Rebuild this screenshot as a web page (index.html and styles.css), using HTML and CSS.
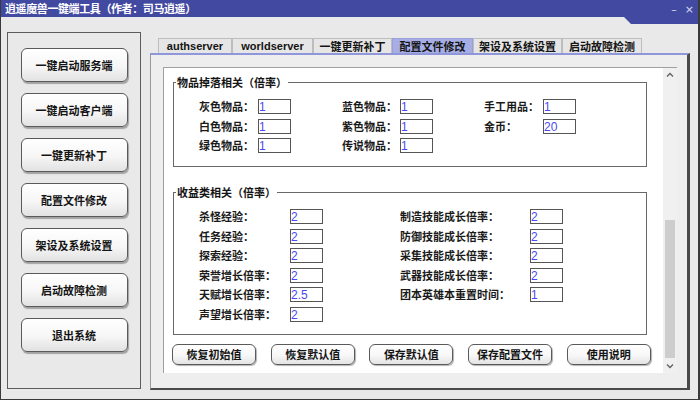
FILE: index.html
```html
<!DOCTYPE html>
<html lang="zh-CN">
<head>
<meta charset="utf-8">
<title>逍遥魔兽一键端工具</title>
<link rel="stylesheet" href="styles.css">
</head>
<body>
<div class="window">
  <div class="titlebar">
    <div class="title-left"><span class="title">逍遥魔兽一键端工具（作者：司马逍遥）</span></div>
    <div class="title-right"><span class="wc-min">–</span><span class="wc-close">×</span></div>
  </div>
  <div class="main">
    <div class="side">
      <button class="sbtn">一键启动服务端</button>
      <button class="sbtn">一键启动客户端</button>
      <button class="sbtn">一键更新补丁</button>
      <button class="sbtn">配置文件修改</button>
      <button class="sbtn">架设及系统设置</button>
      <button class="sbtn">启动故障检测</button>
      <button class="sbtn">退出系统</button>
    </div>
    <div class="right">
      <div class="tabs">
        <div class="tab latin t1">authserver</div>
        <div class="tab latin t2">worldserver</div>
        <div class="tab t3">一键更新补丁</div>
        <div class="tab t4 active">配置文件修改</div>
        <div class="tab t5">架设及系统设置</div>
        <div class="tab t6">启动故障检测</div>
      </div>
      <div class="panel">
        <div class="scroll">
          <div class="content">
            <fieldset class="group g1">
              <legend>物品掉落相关（倍率）</legend>
              <div class="grid1">
                <span class="lbl">灰色物品：</span><span class="inp">1</span><span></span>
                <span class="lbl">蓝色物品：</span><span class="inp">1</span><span></span>
                <span class="lbl">手工用品：</span><span class="inp">1</span>
                <span class="lbl">白色物品：</span><span class="inp">1</span><span></span>
                <span class="lbl">紫色物品：</span><span class="inp">1</span><span></span>
                <span class="lbl">金币：</span><span class="inp">20</span>
                <span class="lbl">绿色物品：</span><span class="inp">1</span><span></span>
                <span class="lbl">传说物品：</span><span class="inp">1</span><span></span>
              </div>
            </fieldset>
            <fieldset class="group g2">
              <legend>收益类相关（倍率）</legend>
              <div class="grid2">
                <span class="lbl">杀怪经验：</span><span class="inp">2</span><span></span>
                <span class="lbl">制造技能成长倍率：</span><span class="inp">2</span>
                <span class="lbl">任务经验：</span><span class="inp">2</span><span></span>
                <span class="lbl">防御技能成长倍率：</span><span class="inp">2</span>
                <span class="lbl">探索经验：</span><span class="inp">2</span><span></span>
                <span class="lbl">采集技能成长倍率：</span><span class="inp">2</span>
                <span class="lbl">荣誉增长倍率：</span><span class="inp">2</span><span></span>
                <span class="lbl">武器技能成长倍率：</span><span class="inp">2</span>
                <span class="lbl">天赋增长倍率：</span><span class="inp">2.5</span><span></span>
                <span class="lbl">团本英雄本重置时间：</span><span class="inp">1</span>
                <span class="lbl">声望增长倍率：</span><span class="inp">2</span>
              </div>
            </fieldset>
            <div class="actions">
              <button class="abtn">恢复初始值</button>
              <button class="abtn">恢复默认值</button>
              <button class="abtn">保存默认值</button>
              <button class="abtn">保存配置文件</button>
              <button class="abtn">使用说明</button>
            </div>
          </div>
          <div class="vscroll">
            <div class="arrow"><svg width="8" height="6" viewBox="0 0 8 6"><polyline points="1,4.5 4,1.5 7,4.5" fill="none" stroke="#606060" stroke-width="1.3"/></svg></div>
            <div class="track"><div class="thumb"></div></div>
            <div class="arrow"><svg width="8" height="6" viewBox="0 0 8 6"><polyline points="1,1.5 4,4.5 7,1.5" fill="none" stroke="#606060" stroke-width="1.3"/></svg></div>
          </div>
        </div>
      </div>
    </div>
  </div>
</div>
</body>
</html>
```
FILE: styles.css
```css
html, body {
  margin: 0;
  padding: 0;
}
body {
  width: 700px;
  height: 400px;
  overflow: hidden;
  background: #e9e9e9;
  font-family: "Noto Sans CJK SC", "Liberation Sans", sans-serif;
  color: #141414;
}
.window {
  width: 700px;
  height: 400px;
  box-sizing: border-box;
  border-left: 1px solid #3a3a3a;
  border-right: 2px solid #3a3a3a;
  border-bottom: 1px solid #3a3a3a;
  background: #e9e9e9;
}
.titlebar {
  display: flex;
  align-items: flex-start;
  height: 17px;
}
.title-left {
  flex: 1;
  height: 17px;
  background: #4249a0;
  display: flex;
  align-items: center;
  padding-left: 4px;
}
.title {
  color: #fff;
  font-size: 11px;
  font-weight: bold;
  letter-spacing: -0.4px;
  line-height: 17px;
}
.title-right {
  width: 74px;
  height: 24px;
  background: #4249a0;
  clip-path: polygon(0 0, 100% 0, 100% 100%, 7px 100%, 0 17px);
  display: flex;
  justify-content: flex-end;
  align-items: flex-start;
  gap: 8px;
  padding-right: 4px;
  box-sizing: border-box;
  color: #d8dbf0;
  font-family: "DejaVu Sans", sans-serif;
  font-size: 11px;
  line-height: 20px;
}
.main {
  display: flex;
  align-items: flex-start;
  padding: 15px 0 0 6px;
}
.side {
  width: 134px;
  height: 357px;
  box-sizing: border-box;
  border: 1px solid #5c5c5c;
  display: flex;
  flex-direction: column;
  align-items: center;
  padding-top: 15px;
  gap: 11px;
}
.sbtn {
  width: 107px;
  height: 34px;
  margin: 0;
  padding: 0;
  border: 1px solid #5a5a5a;
  border-radius: 6px;
  background: linear-gradient(#ffffff, #f6f6f6 55%, #e2e2e2);
  box-shadow: 1px 2px 1px rgba(0, 0, 0, 0.3);
  font-family: "Noto Sans CJK SC", sans-serif;
  font-size: 11px;
  font-weight: bold;
  color: #141414;
}
.right {
  margin-left: 9px;
  margin-top: 6px;
  width: 540px;
}
.tabs {
  display: flex;
  height: 15px;
  padding-left: 8px;
}
.tab {
  height: 15px;
  box-sizing: border-box;
  border: 1px solid #bdbdbd;
  border-bottom: none;
  background: #e6e6e6;
  font-size: 11px;
  font-weight: bold;
  line-height: 14px;
  text-align: center;
  color: #141414;
}
.tab.latin {
  font-family: "Liberation Sans", sans-serif;
}
.tab.active {
  background: #a7aee6;
  border-color: #9aa0dc;
}
.t1 { width: 74px; }
.t2 { width: 81px; }
.t3 { width: 79px; }
.t4 { width: 81px; }
.t5 { width: 89px; }
.t6 { width: 80px; }
.panel {
  height: 337px;
  box-sizing: border-box;
  border-top: 2px solid #8f96da;
  border-left: 1px solid #9a9a9a;
  border-right: 3px solid #4a4a4a;
  border-bottom: 2px solid #4a4a4a;
  background: #eeeeee;
  padding: 12px 0 0 12px;
}
.scroll {
  width: 514px;
  height: 306px;
  box-sizing: border-box;
  border-top: 1px solid #a0a0a0;
  border-left: 1px solid #a0a0a0;
  display: flex;
  background: #ffffff;
}
.content {
  flex: 1;
  padding-left: 9px;
}
.group {
  margin: 0;
  padding: 0;
  width: 474px;
  box-sizing: border-box;
  border: 1px solid #686868;
  min-width: 0;
}
.group legend {
  margin-left: 2px;
  padding: 0 1px;
  font-size: 11px;
  font-weight: bold;
  line-height: 14px;
  color: #141414;
}
.g1 {
  margin-top: 7px;
}
.g2 {
  margin-top: 18px;
}
.grid1 {
  display: grid;
  grid-template-columns: 59px 33px 51px 58px 33px 51px 59px 33px;
  grid-auto-rows: 15px;
  row-gap: 4.5px;
  padding: 10px 0 13px 25px;
  align-items: center;
}
.grid2 {
  display: grid;
  grid-template-columns: 91px 33px 77px 130px 33px;
  grid-auto-rows: 15px;
  row-gap: 4.6px;
  padding: 10px 0 12px 25px;
  align-items: center;
}
.lbl {
  font-size: 11px;
  font-weight: bold;
  white-space: nowrap;
  line-height: 15px;
  color: #1a1a1a;
}
.inp {
  height: 15px;
  box-sizing: border-box;
  border: 1px solid #555555;
  font-family: "Liberation Sans", sans-serif;
  font-size: 12px;
  line-height: 13px;
  padding-top: 1px;
  color: #4848f4;
  overflow: hidden;
}
.actions {
  display: flex;
  gap: 14.7px;
  margin: 9px 0 0 -1px;
}
.abtn {
  width: 84px;
  height: 21px;
  margin: 0;
  padding: 0;
  border: 1px solid #5a5a5a;
  border-radius: 6px;
  background: linear-gradient(#ffffff, #f7f7f7 55%, #e4e4e4);
  box-shadow: 1px 1px 1px rgba(0, 0, 0, 0.3);
  font-family: "Noto Sans CJK SC", sans-serif;
  font-size: 11px;
  font-weight: bold;
  color: #141414;
}
.vscroll {
  width: 14px;
  display: flex;
  flex-direction: column;
  background: #f0f0f0;
}
.arrow {
  height: 14px;
  display: flex;
  align-items: center;
  justify-content: center;
}
.track {
  flex: 1;
  display: flex;
  flex-direction: column;
  align-items: center;
}
.thumb {
  width: 10px;
  height: 138px;
  margin-top: 138px;
  background: #cdcdcd;
}
```
